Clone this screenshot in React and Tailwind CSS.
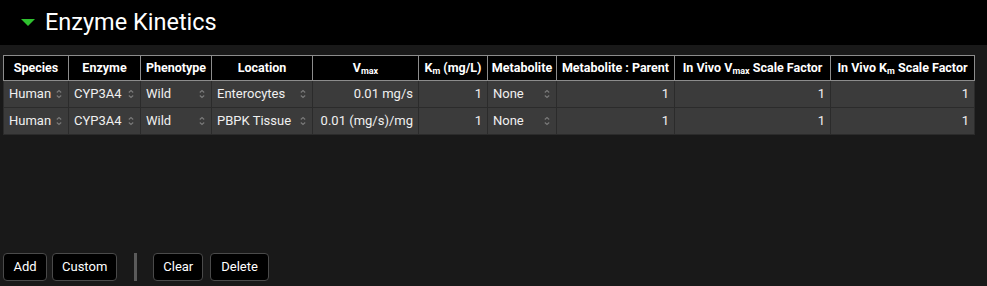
const font = { fontFamily: "Roboto, 'Liberation Sans', sans-serif" };

const COLS = [
  { key: "species", w: 65, label: "Species" },
  { key: "enzyme", w: 72, label: "Enzyme" },
  { key: "pheno", w: 71, label: "Phenotype" },
  { key: "loc", w: 101, label: "Location" },
  { key: "vmax", w: 106, label: "vmax" },
  { key: "km", w: 69, label: "km" },
  { key: "met", w: 69, label: "Metabolite" },
  { key: "mp", w: 118, label: "Metabolite : Parent" },
  { key: "ivv", w: 156, label: "ivv" },
  { key: "ivk", w: 144, label: "ivk" },
];

const ROWS = [
  { species: "Human", enzyme: "CYP3A4", pheno: "Wild", loc: "Enterocytes", vmax: "0.01 mg/s", km: "1", met: "None", mp: "1", ivv: "1", ivk: "1" },
  { species: "Human", enzyme: "CYP3A4", pheno: "Wild", loc: "PBPK Tissue", vmax: "0.01 (mg/s)/mg", km: "1", met: "None", mp: "1", ivv: "1", ivk: "1" },
];

const SELECTS = ["species", "enzyme", "pheno", "loc", "met"];

function Arrows() {
  return (
    <svg width="8" height="12" viewBox="0 0 8 12" className="shrink-0">
      <path d="M1.8 4.5 L4 2.5 L6.2 4.5" fill="none" stroke="#7a7a7a" strokeWidth="1.1" />
      <path d="M1.8 7.5 L4 9.5 L6.2 7.5" fill="none" stroke="#7a7a7a" strokeWidth="1.1" />
    </svg>
  );
}

function HeaderLabel({ label }) {
  if (label === "vmax")
    return (
      <span>
        V<sub className="text-[9px]">max</sub>
      </span>
    );
  if (label === "km")
    return (
      <span>
        K<sub className="text-[9px]">m</sub> (mg/L)
      </span>
    );
  if (label === "ivv")
    return (
      <span>
        In Vivo V<sub className="text-[9px]">max</sub> Scale Factor
      </span>
    );
  if (label === "ivk")
    return (
      <span>
        In Vivo K<sub className="text-[9px]">m</sub> Scale Factor
      </span>
    );
  return <span>{label}</span>;
}

function Button({ children, className }) {
  return (
    <button
      className={
        "h-[28px] min-w-[44px] px-[9px] bg-black border border-[#4a4a4a] rounded-[4px] text-white text-[13px] " +
        (className || "")
      }
    >
      {children}
    </button>
  );
}

export default function App() {
  return (
    <div className="w-[987px] h-[286px] bg-[#191919] flex flex-col overflow-hidden" style={font}>
      <div className="h-[45px] bg-black flex items-center pl-[21px] gap-[10px]">
        <svg width="14" height="7" viewBox="0 0 14 7">
          <path d="M0 0 L14 0 L7 7 Z" fill="#2fc12f" />
        </svg>
        <h1 className="text-white text-[23.5px] leading-none">Enzyme Kinetics</h1>
      </div>

      <div className="pl-[3px] pt-[10px]">
        <table className="border-collapse table-fixed text-[13px]">
          <colgroup>
            {COLS.map((c) => (
              <col key={c.key} style={{ width: c.w }} />
            ))}
          </colgroup>
          <thead>
            <tr className="h-[25px] bg-black">
              {COLS.map((c) => (
                <th
                  key={c.key}
                  className="border border-[#8c8c8c] text-white font-bold text-[12.5px] text-center px-[3px] whitespace-nowrap"
                >
                  <HeaderLabel label={c.label} />
                </th>
              ))}
            </tr>
          </thead>
          <tbody>
            {ROWS.map((r, i) => (
              <tr key={i} className="h-[27px] bg-[#3b3b3b]">
                {COLS.map((c) => {
                  const isSel = SELECTS.includes(c.key);
                  return (
                    <td
                      key={c.key}
                      className="border border-[#2b2b2b] text-[#f0f0f0] px-[5px] whitespace-nowrap"
                    >
                      {isSel ? (
                        <div className="flex items-center justify-between">
                          <span>{r[c.key]}</span>
                          <Arrows />
                        </div>
                      ) : (
                        <div className="text-right">{r[c.key]}</div>
                      )}
                    </td>
                  );
                })}
              </tr>
            ))}
          </tbody>
        </table>
      </div>

      <div className="mt-auto mb-[5px] pl-[3px] flex items-center">
        <Button>Add</Button>
        <Button className="ml-[5px]">Custom</Button>
        <div className="w-[3px] h-[28px] bg-[#5a5a5a] ml-[17px] mr-[16px]" />
        <Button>Clear</Button>
        <Button className="ml-[7px] px-[10px]">Delete</Button>
      </div>
    </div>
  );
}
